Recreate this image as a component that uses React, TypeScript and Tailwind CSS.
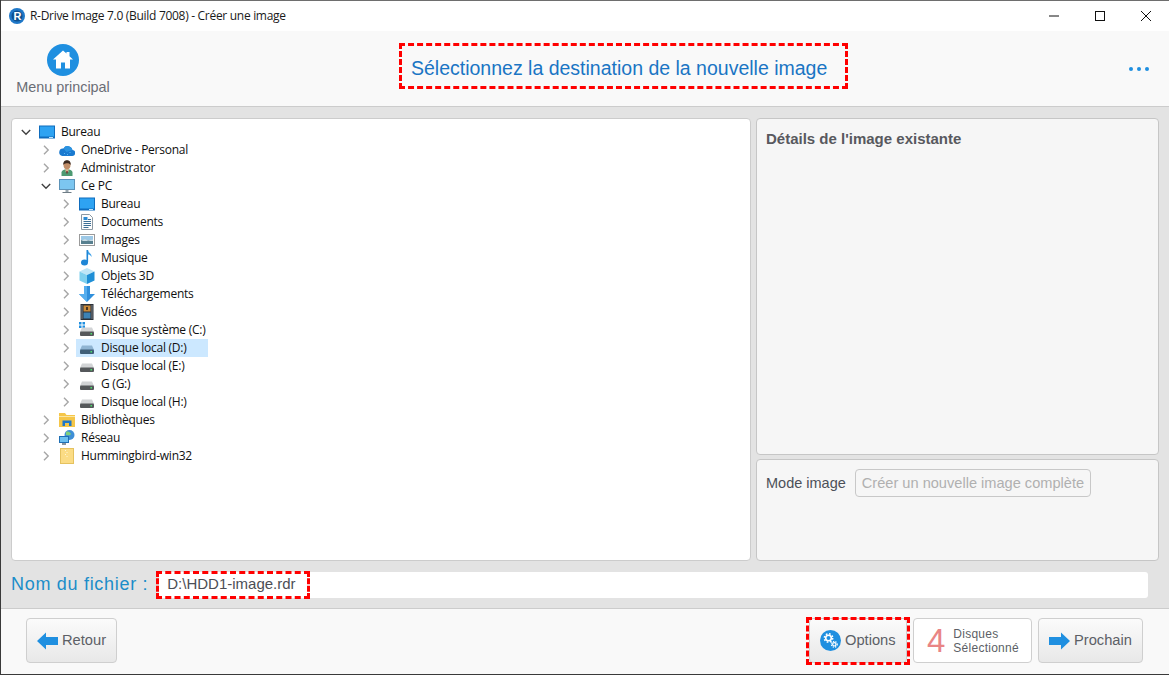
import { ReactNode } from "react";

type TreeRow = {
  label: string;
  level: 0 | 1 | 2;
  icon: ReactNode;
  open?: boolean;
  selected?: boolean;
};

const DesktopIcon = () => (
  <svg width="16" height="16" viewBox="0 0 16 16">
    <rect x="0" y="1.500" width="16" height="13" fill="#0f6cbd" />
    <rect x="1" y="2.500" width="14" height="10" fill="#2ea3f2" />
    <rect x="10" y="13" width="4" height="1" fill="#bfe3fa" />
  </svg>
);

const CloudIcon = () => (
  <svg width="16" height="16" viewBox="0 0 16 16">
    <path d="M3.300 14h9.700a3 3 0 0 0 .4-6A4.800 4.800 0 0 0 4.500 6.500 3.800 3.800 0 0 0 3.300 14z" fill="#1a7ad0" />
    <path d="M4.500 6.500A4.800 4.800 0 0 1 13.400 8L7.500 10z" fill="#2b93e0" />
    <path d="M5 11.500h1M8 12.500h1M10.500 10.500h1" stroke="#5db5ee" />
  </svg>
);

const UserIcon = () => (
  <svg width="16" height="16" viewBox="0 0 16 16">
    <path d="M2.500 16v-3.500c0-2 2-3.300 5.500-3.300s5.500 1.300 5.500 3.300V16z" fill="#4d9a72" />
    <rect x="6.500" y="8.500" width="3" height="3.500" fill="#d9b58f" />
    <ellipse cx="8" cy="5" rx="3.500" ry="4.200" fill="#c28e68" />
    <path d="M4.300 5C4 1.500 6 .3 8 .3s4 1.200 3.700 4.700C10.500 3.300 9 3 7.500 3.300 6 3.500 5 4 4.300 5z" fill="#3b2a20" />
    <rect x="7.300" y="11" width="1.400" height="2.500" fill="#7a2e2e" />
  </svg>
);

const PcIcon = () => (
  <svg width="16" height="16" viewBox="0 0 16 16">
    <rect x="0" y="1" width="16" height="11" fill="#5d93b8" />
    <rect x="1" y="2" width="14" height="9" fill="#7cc6f0" />
    <rect x="6.500" y="12" width="3" height="2" fill="#9aa7b0" />
    <rect x="3.500" y="14" width="9" height="1" fill="#6f7d86" />
  </svg>
);

const DocIcon = () => (
  <svg width="16" height="16" viewBox="0 0 16 16">
    <path d="M2.500 .5h8l3 3v12h-11z" fill="#fdfdfd" stroke="#8b98a3" />
    <rect x="4.500" y="3" width="4" height="3" fill="#2a8ad4" />
    <path d="M9 5.500h3M4.500 7.500h7.500M4.500 9.500h7.500M4.500 11.500h7.500M4.500 13.500h5" stroke="#3c6f96" />
  </svg>
);

const PictureIcon = () => (
  <svg width="16" height="16" viewBox="0 0 16 16">
    <rect x=".5" y="2.500" width="15" height="11" fill="#fff" stroke="#9a9a9a" />
    <rect x="2" y="4" width="12" height="4" fill="#9cc8e6" />
    <rect x="2" y="8" width="12" height="4" fill="#58808f" />
    <path d="M2 9l4-2 3 1.500 5-1V9z" fill="#c9dbe4" />
  </svg>
);

const MusicIcon = () => (
  <svg width="16" height="16" viewBox="0 0 16 16">
    <ellipse cx="5.500" cy="12.500" rx="3.500" ry="3" fill="#1f86d6" />
    <rect x="7.500" y="0" width="1.600" height="12" fill="#1f86d6" />
    <path d="M9 0c.5 3 4 3.500 3.500 7C11.500 5 10 4.500 9 4.500z" fill="#3fa2ea" />
  </svg>
);

const CubeIcon = () => (
  <svg width="16" height="16" viewBox="0 0 16 16">
    <path d="M8 0l7.500 3.500L8 7 .5 3.500z" fill="#bfe6f7" />
    <path d="M.5 3.500L8 7v9l-7.500-3.500z" fill="#7fd0ee" />
    <path d="M15.500 3.500L8 7v9l7.500-3.500z" fill="#1f8fd6" />
  </svg>
);

const DownloadIcon = () => (
  <svg width="16" height="16" viewBox="0 0 16 16">
    <path d="M5 0h6v8h5l-8 8-8-8h5z" fill="#2f8fdc" />
    <path d="M5 0h3v16L0 8h5z" fill="#55aeee" />
  </svg>
);

const VideoIcon = () => (
  <svg width="16" height="16" viewBox="0 0 16 16">
    <rect x="1.500" y="0" width="13" height="16" fill="#2b3138" />
    <path d="M3 1.500v13M13 1.500v13" stroke="#cfd6db" strokeWidth="1" strokeDasharray="1 1" />
    <rect x="4.500" y="1.500" width="7" height="6" fill="#c98a3a" />
    <rect x="4.500" y="8.500" width="7" height="6" fill="#3d83b5" />
    <rect x="7" y="3" width="2" height="3" fill="#4a3520" />
  </svg>
);

const DriveIcon = ({ system, active }: { system?: boolean; active?: boolean }) => (
  <svg width="16" height="16" viewBox="0 0 16 16">
    {system && (
      <g fill="#1f8fe0">
        <rect x="0" y="0" width="2.500" height="2.500" />
        <rect x="3.500" y="0" width="2.500" height="2.500" />
        <rect x="0" y="3.500" width="2.500" height="2.500" />
        <rect x="3.500" y="3.500" width="2.500" height="2.500" />
      </g>
    )}
    <path d="M3 5.500h10l2 4.500H1z" fill={active ? "#8fb4d2" : "#d2d4d6"} />
    <rect x="1" y="9.500" width="14" height="4.500" rx="1" fill={active ? "#3f5f78" : "#55585b"} />
    <rect x="11.500" y="11" width="1.500" height="1.500" fill="#4be36a" />
  </svg>
);

const LibraryIcon = () => (
  <svg width="16" height="16" viewBox="0 0 16 16">
    <path d="M0 1h6l1.500 2H16v12H0z" fill="#f5c649" />
    <rect x="0" y="4" width="16" height="1" fill="#fbe6a2" />
    <path d="M3.500 14V8.500h9V14h-2.500v-3h-4v3z" fill="#1f77c9" />
  </svg>
);

const NetworkIcon = () => (
  <svg width="16" height="16" viewBox="0 0 16 16">
    <circle cx="10.500" cy="5" r="5" fill="#3f8fd6" />
    <path d="M7 2c2-1 4 0 5 2-1 2-3 1-5 1z" fill="#7ed07c" />
    <rect x="0" y="6" width="10" height="7" fill="#1f6fb5" />
    <rect x="1" y="7" width="8" height="5" fill="#6cc0f0" />
    <rect x="3" y="13" width="4" height="2" fill="#8a96a0" />
  </svg>
);

const FolderIcon = () => (
  <svg width="16" height="16" viewBox="0 0 16 16">
    <rect x="1.500" y=".5" width="13" height="15" fill="#fbdc85" stroke="#e5c25f" />
    <path d="M6.500 2v1M8 4v1M6.500 6v1M8 8v1" stroke="#fff6d5" />
  </svg>
);

const treeRows: TreeRow[] = [
  { label: "Bureau", level: 0, open: true, icon: <DesktopIcon /> },
  { label: "OneDrive - Personal", level: 1, icon: <CloudIcon /> },
  { label: "Administrator", level: 1, icon: <UserIcon /> },
  { label: "Ce PC", level: 1, open: true, icon: <PcIcon /> },
  { label: "Bureau", level: 2, icon: <DesktopIcon /> },
  { label: "Documents", level: 2, icon: <DocIcon /> },
  { label: "Images", level: 2, icon: <PictureIcon /> },
  { label: "Musique", level: 2, icon: <MusicIcon /> },
  { label: "Objets 3D", level: 2, icon: <CubeIcon /> },
  { label: "Téléchargements", level: 2, icon: <DownloadIcon /> },
  { label: "Vidéos", level: 2, icon: <VideoIcon /> },
  { label: "Disque système (C:)", level: 2, icon: <DriveIcon system /> },
  { label: "Disque local (D:)", level: 2, selected: true, icon: <DriveIcon active /> },
  { label: "Disque local (E:)", level: 2, icon: <DriveIcon /> },
  { label: "G (G:)", level: 2, icon: <DriveIcon /> },
  { label: "Disque local (H:)", level: 2, icon: <DriveIcon /> },
  { label: "Bibliothèques", level: 1, icon: <LibraryIcon /> },
  { label: "Réseau", level: 1, icon: <NetworkIcon /> },
  { label: "Hummingbird-win32", level: 1, icon: <FolderIcon /> },
];

const levelPadding = ["pl-[9px]", "pl-[29px]", "pl-[49px]"];

function Chevron({ open }: { open?: boolean }) {
  return (
    <svg width="10" height="10" viewBox="0 0 10 10" fill="none" className="shrink-0">
      {open ? (
        <path d="M.8 3l4.200 4.200L9.200 3" stroke="#404040" strokeWidth="1.400" />
      ) : (
        <path d="M3 .8l4.200 4.200L3 9.200" stroke="#a6a6a6" strokeWidth="1.400" />
      )}
    </svg>
  );
}

function Row({ row }: { row: TreeRow }) {
  return (
    <div className={`flex h-[18px] items-center ${levelPadding[row.level]}`}>
      <span className="flex w-[9px] shrink-0 justify-center">
        <Chevron open={row.open} />
      </span>
      <div
        className={`ml-[6px] flex h-[18px] items-center pl-[3px] pr-[2px] ${
          row.selected ? "w-[132px] bg-[#cce8ff]" : ""
        }`}
      >
        <span className="flex w-[16px] shrink-0 justify-center">{row.icon}</span>
        <span className="ml-[6px] whitespace-nowrap text-[12px] leading-[18px] tracking-[-0.25px] text-[#101010] font-['Open_Sans',sans-serif]">
          {row.label}
        </span>
      </div>
    </div>
  );
}

function FooterButton({ children, className }: { children: ReactNode; className?: string }) {
  return (
    <button
      className={`flex h-[45px] items-center rounded-[4px] border border-[#cfcfcf] bg-gradient-to-b from-[#fbfbfb] to-[#e8e8e8] text-[14.7px] text-[#5c5f66] ${className ?? ""}`}
    >
      {children}
    </button>
  );
}

export default function App() {
  return (
    <div className="flex h-[675px] w-[1169px] flex-col overflow-hidden border-l border-[#3a3a3a] bg-white font-['Liberation_Sans',sans-serif]">
      <div className="h-px bg-[#6e6e6e]" />

      {/* title bar */}
      <div className="flex h-[30px] items-center bg-white pl-[8px]">
        <svg width="16" height="16" viewBox="0 0 16 16">
          <circle cx="8" cy="8" r="8" fill="#1f78c8" />
          <circle cx="8" cy="8" r="5.500" fill="#0d4f8e" />
          <text x="4.500" y="12" fontSize="11" fontWeight="700" fill="#fff" fontFamily="Liberation Sans">
            R
          </text>
        </svg>
        <span className="ml-[5px] text-[12px] tracking-[-0.3px] text-[#1a1a1a] font-['Open_Sans',sans-serif]">
          R-Drive Image 7.0 (Build 7008) - Créer une image
        </span>
        <div className="ml-auto flex items-center">
          <svg width="46" height="30" viewBox="0 0 46 30">
            <path d="M18 15h10" stroke="#111" />
          </svg>
          <svg width="46" height="30" viewBox="0 0 46 30">
            <rect x="18.500" y="10.500" width="9" height="9" fill="none" stroke="#111" />
          </svg>
          <svg width="46" height="30" viewBox="0 0 46 30">
            <path d="M18 10l10 10M28 10l-10 10" stroke="#111" />
          </svg>
        </div>
      </div>

      {/* toolbar */}
      <div className="flex h-[76px] items-start border-b border-[#cccccc] bg-[#f9f9f9]">
        <div className="ml-[14px] mt-[13px] flex w-[96px] flex-col items-center">
          <svg width="32" height="32" viewBox="0 0 32 32">
            <circle cx="16" cy="16" r="16" fill="#1f8fe0" />
            <path d="M16 6.500L6 15.500h3v9h5v-6h4v6h5v-9h3l-3.500-3.200V8h-3v1.600z" fill="#fff" />
          </svg>
          <span className="mt-[3px] whitespace-nowrap text-[14.4px] leading-[16px] text-[#6a6d75]">
            Menu principal
          </span>
        </div>
        <div className="ml-[288px] mt-[12px] flex h-[46px] w-[449px] items-center border-[3px] border-dashed border-[#f00] pl-[9px] pt-[5px]">
          <span className="whitespace-nowrap text-[19.5px] text-[#1a75c4]">
            Sélectionnez la destination de la nouvelle image
          </span>
        </div>
        <div className="ml-[281px] mt-[36px] flex gap-[4px]">
          <span className="h-[4px] w-[4px] rounded-full bg-[#1f8fe0]" />
          <span className="h-[4px] w-[4px] rounded-full bg-[#1f8fe0]" />
          <span className="h-[4px] w-[4px] rounded-full bg-[#1f8fe0]" />
        </div>
      </div>

      {/* content */}
      <div className="flex h-[501px] flex-col bg-[#e3e3e3] pl-[10px] pr-[10px] pt-[11px]">
        <div className="flex h-[443px] gap-[5px]">
          <div className="w-[740px] rounded-[4px] border border-[#cccccc] bg-white pt-[4px]">
            {treeRows.map((row, i) => (
              <Row key={i} row={row} />
            ))}
          </div>
          <div className="flex w-[403px] flex-col gap-[4px]">
            <div className="h-[337px] rounded-[4px] border border-[#c6c6c6] bg-[#f6f6f6] pl-[9px] pt-[11px]">
              <div className="text-[15px] leading-[17px] font-bold text-[#58595e]">Détails de l'image existante</div>
            </div>
            <div className="h-[102px] rounded-[4px] border border-[#c6c6c6] bg-[#f6f6f6] pl-[9px] pt-[9px]">
              <div className="flex items-center gap-[9px]">
                <span className="pt-[1px] text-[14.5px] text-[#4c5058]">Mode image</span>
                <span className="flex h-[28px] items-center rounded-[4px] border border-[#c8c8c8] px-[6px] pt-[1px] text-[14.6px] text-[#b0b0b0]">
                  Créer un nouvelle image complète
                </span>
              </div>
            </div>
          </div>
        </div>

        <div className="mt-[10px] flex h-[27px] items-center">
          <span className="whitespace-nowrap text-[18px] tracking-[0.7px] text-[#1b8dc9]">Nom du fichier :</span>
          <div className="relative ml-[11px] flex h-[26px] w-[989px] items-center rounded-[3px] bg-white pl-[8px] text-[15px] text-[#4b4e55]">
            D:\HDD1-image.rdr
            <div className="absolute left-[-3px] top-[-1px] h-[28px] w-[154px] border-[3px] border-dashed border-[#f00]" />
          </div>
        </div>
      </div>

      {/* footer */}
      <div className="flex h-[66px] items-center border-t border-[#cccccc] bg-[#f9f9f9] pb-[2px] pl-[25px]">
        <FooterButton className="w-[91px] gap-[4px] pl-[10px]">
          <svg width="21" height="18" viewBox="0 0 21 18">
            <path d="M0 9l9-8.500V5h12v8H9v4.500z" fill="#1f8fe0" />
          </svg>
          Retour
        </FooterButton>
        <div className="relative ml-[692px]">
          <FooterButton className="w-[98px] gap-[4px] pl-[10px]">
            <svg width="21" height="21" viewBox="0 0 21 21">
              <circle cx="10.500" cy="10.500" r="10.500" fill="#1f8fe0" />
              <circle cx="8.500" cy="8" r="2.800" fill="none" stroke="#fff" strokeWidth="1.600" />
              <circle cx="8.500" cy="8" r="4.200" fill="none" stroke="#fff" strokeWidth="1.500" strokeDasharray="1.700 1.600" />
              <circle cx="14.300" cy="14.300" r="1.700" fill="none" stroke="#fff" strokeWidth="1.200" />
              <circle cx="14.300" cy="14.300" r="2.900" fill="none" stroke="#fff" strokeWidth="1.200" strokeDasharray="1.300 1.100" />
            </svg>
            Options
          </FooterButton>
          <div className="absolute -bottom-[2px] -left-[3px] -right-[3px] -top-[1px] border-[3px] border-dashed border-[#f00]" />
        </div>
        <div className="ml-[6px] flex h-[45px] w-[119px] items-center rounded-[4px] border border-[#cfcfcf] bg-white pl-[13px]">
          <span className="text-[33px] leading-none text-[#e98585]">4</span>
          <span className="ml-[8px] text-[12px] leading-[14px] tracking-[0.25px] text-[#5c5f66]">
            Disques
            <br />
            Sélectionné
          </span>
        </div>
        <FooterButton className="ml-[6px] w-[105px] gap-[4px] pl-[10px]">
          <svg width="21" height="18" viewBox="0 0 21 18">
            <path d="M21 9l-9-8.500V5H0v8h12v4.500z" fill="#1f8fe0" />
          </svg>
          Prochain
        </FooterButton>
      </div>
      <div className="h-px bg-[#3a3a3a]" />
    </div>
  );
}
